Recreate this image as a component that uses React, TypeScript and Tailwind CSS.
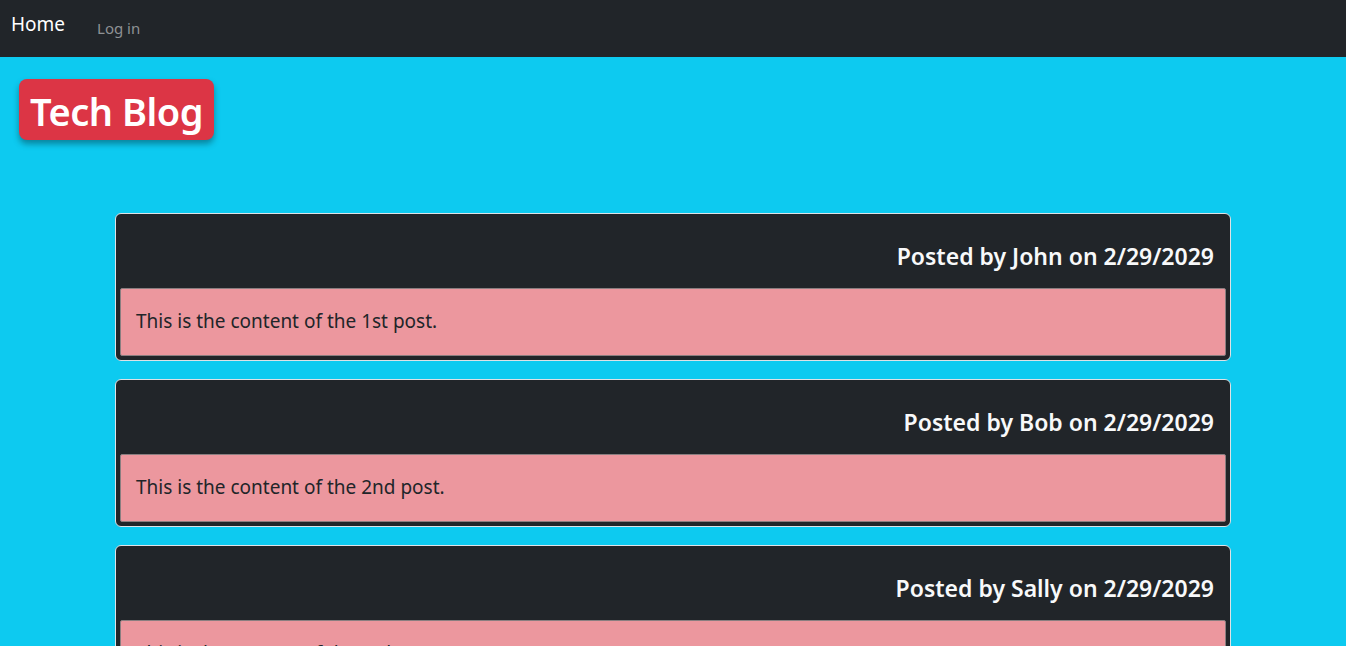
import React from "react";

const posts = [
  { author: "John", date: "2/29/2029", content: "This is the content of the 1st post." },
  { author: "Bob", date: "2/29/2029", content: "This is the content of the 2nd post." },
  { author: "Sally", date: "2/29/2029", content: "This is the content of the 3rd post." },
];

export default function App() {
  return (
    <div
      className="min-h-[646px] bg-[#0dcaf0]"
      style={{ fontFamily: '"Noto Sans", "Open Sans", sans-serif' }}
    >
      <nav className="h-[57px] bg-[#212529] flex items-start">
        <a className="ml-[11px] mt-[10px] text-[19px] leading-[28px] text-white">Home</a>
        <a className="ml-[32px] mt-[16px] text-[15px] leading-[24px] text-[#8e9194]">Log in</a>
      </nav>
      <div className="pt-[22px] pl-[19px]">
        <div className="inline-block bg-[#dc3545] rounded-[8px] px-[11px] h-[61px] shadow-[0_4px_6px_rgba(0,0,0,0.35)]">
          <h1 className="text-white text-[38px] leading-[64px] font-semibold tracking-[-0.5px]">Tech Blog</h1>
        </div>
      </div>
      <div className="w-[1116px] mx-auto mt-[73px] flex flex-col gap-[18px]">
        {posts.map((p) => (
          <div
            key={p.author}
            className="border border-[#dee2e6] rounded-[6px] bg-[#212529] p-[4px] pt-0"
          >
            <div className="pt-[27px] pb-[17px] pr-[12px] text-right">
              <h4 className="text-[#f8f9fa] text-[23px] leading-[30px] font-semibold">
                Posted by {p.author} on {p.date}
              </h4>
            </div>
            <div className="bg-[#ec979e] border border-[#8a7e80] rounded-[2px] h-[68px] px-[15px] pb-[3px] flex items-center">
              <p className="text-[#212529] text-[19px] leading-[26px]">{p.content}</p>
            </div>
          </div>
        ))}
      </div>
    </div>
  );
}
